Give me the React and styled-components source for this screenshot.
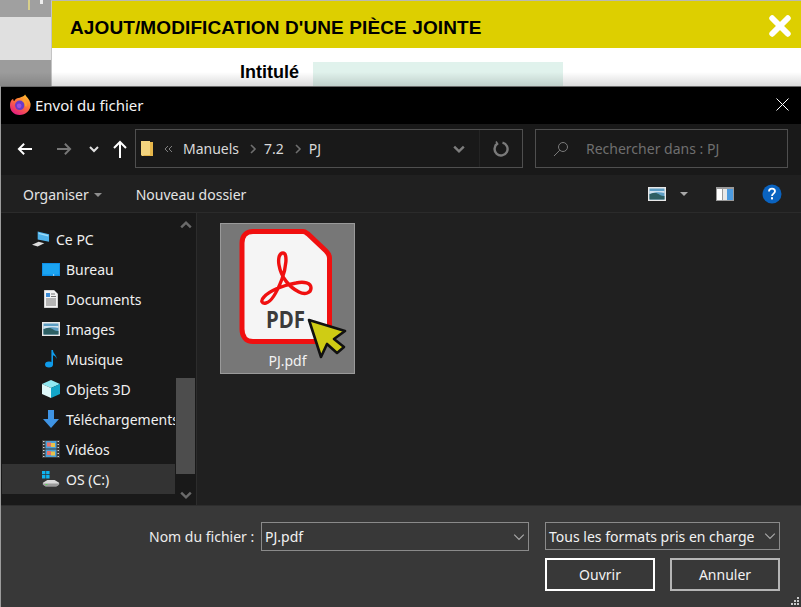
import React from 'react'
import styled, { createGlobalStyle } from 'styled-components'

const GlobalStyle = createGlobalStyle`
  html, body {
    margin: 0;
    padding: 0;
    background: #9c9c9c;
  }
  * { box-sizing: border-box; }
`

const Page = styled.div`
  position: relative;
  width: 801px;
  height: 607px;
  display: flex;
  overflow: hidden;
  font-family: "Noto Sans", "Open Sans", sans-serif;
`

/* grey page behind the modal */
const Backdrop = styled.div`
  width: 51px;
  display: flex;
  flex-direction: column;
  flex-shrink: 0;
`
const BackdropTop = styled.div`
  height: 17px;
  background: #a0a0a0;
  display: flex;
  gap: 10px;
  padding-left: 28px;
  align-items: flex-start;
`
const BackdropMark = styled.span`
  width: ${p => p.$w}px;
  height: ${p => p.$h}px;
  background: ${p => p.$c};
`
const BackdropMid = styled.div`
  height: 43px;
  background: #e0e0e0;
`
const BackdropLow = styled.div`
  flex: 1;
  background: #9c9c9c;
`

const Modal = styled.div`
  flex: 1;
  display: flex;
  flex-direction: column;
  border-top: 1px solid #b9b9b0;
  border-left: 1px solid #c4c4c4;
`
const ModalHeader = styled.div`
  height: 47px;
  background: #ddcf00;
  display: flex;
  align-items: center;
  justify-content: space-between;
  padding: 0 10px 0 18px;
`
const ModalTitle = styled.h1`
  margin: 6px 0 0;
  font-family: "Liberation Sans", Arial, sans-serif;
  font-weight: 700;
  font-size: 19px;
  letter-spacing: 0.11px;
  color: #000;
`
const CloseWrap = styled.span`
  display: flex;
  margin-top: 2px;
`
const ModalBody = styled.div`
  flex: 1;
  background: #fff;
  display: flex;
  align-items: flex-start;
  padding-top: 14px;
`
const FieldLabel = styled.div`
  width: 247px;
  text-align: right;
  font-family: "Liberation Sans", Arial, sans-serif;
  font-weight: 700;
  font-size: 18px;
  color: #000;
`
const FieldBox = styled.div`
  margin-left: 14px;
  width: 250px;
  height: 60px;
  background: #e0f2ec;
`

/* the file dialog lies over the page */
const DialogShadow = styled.div`
  position: absolute;
  left: 0;
  right: 0;
  top: 72px;
  height: 14px;
  background: linear-gradient(to bottom, rgba(0, 0, 0, 0), rgba(0, 0, 0, 0.14));
`
const Dialog = styled.div`
  position: absolute;
  left: 1px;
  top: 86px;
  width: 800px;
  height: 521px;
  display: flex;
  flex-direction: column;
  color: #fff;
  font-size: 14px;
  background: #202020;
  border-top: 1px solid #6a6a6a;
`
const TitleBar = styled.div`
  height: 37px;
  flex-shrink: 0;
  background: #000;
  display: flex;
  align-items: center;
  padding: 0 12px 2px 9px;
  gap: 4px;
`
const TitleText = styled.span`
  flex: 1;
  font-size: 15px;
  color: #f4f4f4;
`
const AddressRow = styled.div`
  height: 51px;
  flex-shrink: 0;
  background: #191919;
  display: flex;
  align-items: flex-start;
  padding: 5px 12px 0 0;
`
const NavButtons = styled.div`
  width: 134px;
  height: 39px;
  display: flex;
  align-items: center;
  padding-left: 16px;
`
const NavButton = styled.span`
  width: ${p => p.$w}px;
  display: flex;
  align-items: center;
`
const AddressBox = styled.div`
  width: 388px;
  height: 39px;
  border: 1px solid #4f4f4f;
  display: flex;
  align-items: center;
  padding-left: 5px;
`
const Crumb = styled.span`
  color: #d9d9d9;
  margin-left: ${p => p.$ml || 0}px;
  display: inline-flex;
  align-items: center;
`
const AddressEnd = styled.div`
  margin-left: auto;
  height: 100%;
  display: flex;
  align-items: center;
`
const AddressChevron = styled.div`
  width: 42px;
  height: 100%;
  display: flex;
  align-items: center;
  justify-content: center;
  border-right: 1px solid #242424;
`
const Refresh = styled.div`
  width: 42px;
  display: flex;
  align-items: center;
  justify-content: center;
`
const SearchBox = styled.div`
  width: 253px;
  height: 39px;
  margin-left: 12px;
  border: 1px solid #4f4f4f;
  display: flex;
  align-items: center;
  padding-left: 17px;
  gap: 17px;
  color: #6f6f6f;
`
const Toolbar = styled.div`
  height: 38px;
  flex-shrink: 0;
  background: #202020;
  display: flex;
  align-items: center;
  padding: 2px 19px 0 22px;
  border-bottom: 1px solid #2b2b2b;
  color: #e4e4e4;
`
const ToolItem = styled.span`
  display: inline-flex;
  align-items: center;
  gap: 5px;
  margin-right: 34px;
`
const ToolIcons = styled.div`
  margin-left: auto;
  display: flex;
  align-items: center;
  margin-top: -2px;
`
const ToolGap = styled.span`
  width: ${p => p.$w}px;
`
const Caret = styled.span`
  width: 0;
  height: 0;
  border-left: 4px solid transparent;
  border-right: 4px solid transparent;
  border-top: 4px solid ${p => p.$c || '#8f8f8f'};
`
const Content = styled.div`
  flex: 1;
  min-height: 0;
  display: flex;
`
const NavPanel = styled.div`
  width: 196px;
  flex-shrink: 0;
  background: #191919;
  display: flex;
  border-right: 1px solid #2c2c2c;
`
const NavList = styled.div`
  width: 173px;
  margin-left: 1px;
  padding-top: 11px;
  display: flex;
  flex-direction: column;
  overflow: hidden;
`
const NavRow = styled.div`
  height: 30px;
  flex-shrink: 0;
  display: flex;
  align-items: center;
  padding-left: ${p => p.$root ? 30 : 40}px;
  gap: 6px;
  color: #f0f0f0;
  white-space: nowrap;
  background: ${p => p.$selected ? '#333' : 'transparent'};
`
const NavIcon = styled.span`
  width: 18px;
  height: 20px;
  flex-shrink: 0;
  display: flex;
  align-items: center;
  justify-content: center;
`
const Scrollbar = styled.div`
  width: 19px;
  margin-left: 1px;
  display: flex;
  flex-direction: column;
  align-items: center;
  justify-content: space-between;
  padding: 6px 0 4px;
`
const ScrollTrack = styled.div`
  flex: 1;
  width: 100%;
  display: flex;
  align-items: flex-end;
  padding-bottom: 15px;
`
const ScrollThumb = styled.div`
  width: 100%;
  height: 96px;
  background: #4d4d4d;
`
const Files = styled.div`
  flex: 1;
  background: #202020;
  padding: 10px 0 0 23px;
`
const FileTile = styled.div`
  width: 135px;
  height: 151px;
  background: #777;
  border: 1px solid #9a9a9a;
  padding: 5px 0 0 18px;
  position: relative;
`
const FileName = styled.span`
  position: absolute;
  left: 0;
  right: 0;
  text-align: center;
  bottom: 3px;
  color: #f2f2f2;
`
const Footer = styled.div`
  height: 102px;
  flex-shrink: 0;
  background: #383838;
  border-top: 1px solid #2d2d2d;
  position: relative;
  padding: 16px 21px 0 148px;
  display: flex;
  flex-direction: column;
  gap: 7px;
`
const FooterRow = styled.div`
  display: flex;
  align-items: flex-start;
  justify-content: ${p => p.$end ? 'flex-end' : 'flex-start'};
`
const FooterLabel = styled.span`
  width: 112px;
  flex-shrink: 0;
  color: #ececec;
  line-height: 29px;
`
const Combo = styled.div`
  width: ${p => p.$w}px;
  height: ${p => p.$h}px;
  margin-right: ${p => p.$mr || 0}px;
  border: 1px solid #8a8a8a;
  display: flex;
  align-items: center;
  justify-content: space-between;
  padding: 0 3px 0 3px;
  color: #f2f2f2;
`
const DialogButton = styled.div`
  width: 110px;
  height: 33px;
  margin-left: ${p => p.$ml || 0}px;
  border: 2px solid ${p => p.$primary ? '#fff' : '#b5b5b5'};
  display: flex;
  align-items: center;
  justify-content: center;
  color: #f2f2f2;
`
const Grip = styled.svg`
  position: absolute;
  right: 1px;
  bottom: 1px;
`

const ArrowLeft = () => (
  <svg width="16" height="14" viewBox="0 0 18 16" fill="none" stroke="#fff" strokeWidth="2.2">
    <path d="M17 8H2M8 2L2 8l6 6" />
  </svg>
)
const ArrowRight = () => (
  <svg width="16" height="14" viewBox="0 0 18 16" fill="none" stroke="#777" strokeWidth="2.2">
    <path d="M1 8h15M10 2l6 6-6 6" />
  </svg>
)
const ArrowUp = () => (
  <svg width="14" height="18" viewBox="0 0 14 18" fill="none" stroke="#fff" strokeWidth="2">
    <path d="M7 18V2M1 8l6-6 6 6" />
  </svg>
)
const Chevron = ({ size = 10, color = '#e0e0e0', width = 2, up }) => (
  <svg width={size} height={size} viewBox="0 0 10 10" fill="none" stroke={color} strokeWidth={width}>
    <path d={up ? 'M1 7l4-4 4 4' : 'M1 3l4 4 4-4'} />
  </svg>
)
const CrumbArrow = () => (
  <svg width="8" height="10" viewBox="0 0 8 10" fill="none" stroke="#6e6e6e" strokeWidth="1.6">
    <path d="M2 1l4 4-4 4" />
  </svg>
)
const DoubleChevron = () => (
  <svg width="9" height="8" viewBox="0 0 9 8" fill="none" stroke="#808080" strokeWidth="1">
    <path d="M4 1L1 4l3 3M8 1L5 4l3 3" />
  </svg>
)
const CloseThin = () => (
  <svg width="13" height="13" viewBox="0 0 13 13" stroke="#fff" strokeWidth="1">
    <path d="M0.5 0.5l12 12M12.5 0.5l-12 12" />
  </svg>
)
const CloseBold = () => (
  <svg width="22" height="22" viewBox="0 0 24 24" stroke="#fff" strokeWidth="6.4" strokeLinecap="round">
    <path d="M3.5 3.5l17 17M20.5 3.5l-17 17" />
  </svg>
)
const Firefox = () => (
  <svg width="21" height="21" viewBox="1 0.5 19.5 19.5">
    <defs>
      <linearGradient id="ffx" x1="0.8" y1="0" x2="0.2" y2="1">
        <stop offset="0" stopColor="#ffc22e" />
        <stop offset="0.45" stopColor="#ff7139" />
        <stop offset="1" stopColor="#e31587" />
      </linearGradient>
    </defs>
    <path d="M15 1c1 2 4 4 5 8 1 6-4 11-10 11S1 16 1 11c0-3 1-5 3-6 0 1 0 2 1 2 1-2 3-3 5-3 2-1 4-1 5-3z" fill="url(#ffx)" />
    <circle cx="10" cy="11" r="4.4" fill="#6a3bc8" />
    <circle cx="9.5" cy="11.5" r="2.2" fill="#9a4fe0" />
    <path d="M13 6c2 1 3 3 2.6 6" stroke="#ffa22e" strokeWidth="2" fill="none" />
  </svg>
)
const AddressFolder = () => (
  <svg width="13" height="16" viewBox="0 0 13 16">
    <path d="M0 0h9v15H1l-1-1z" fill="#f3d47f" />
    <path d="M9 1h3v14H3l-1-1h7z" fill="#e6b64a" />
  </svg>
)
const RefreshIcon = () => (
  <svg width="16" height="16" viewBox="0 0 16 16" fill="none" stroke="#7a7a7a" strokeWidth="2.4">
    <path d="M4.5 2.6A6.5 6.5 0 1 0 9.5 1.7" />
    <path d="M3 0.5l1.6 2.4-2.6 1.2" strokeWidth="1.6" />
  </svg>
)
const SearchIcon = () => (
  <svg width="16" height="16" viewBox="0 0 16 16" fill="none" stroke="#7b7b7b" strokeWidth="1">
    <circle cx="10" cy="6" r="4.5" />
    <path d="M6.8 9.2L1 15" />
  </svg>
)
const PictureIcon = () => (
  <svg width="18" height="14" viewBox="0 0 18 14">
    <rect width="18" height="14" fill="#e8e8e8" />
    <rect x="1.5" y="1.5" width="15" height="11" fill="#5d9ec4" />
    <path d="M1.5 7c3-2 6-2 9 0s4 2 6 2v3.5h-15z" fill="#2d5f63" />
    <path d="M1.5 4h15v2c-4-1-10-1-15 1z" fill="#cfe2ef" />
  </svg>
)
const PanelIcon = () => (
  <svg width="18" height="14" viewBox="0 0 18 14">
    <rect width="18" height="14" fill="#9a9a9a" />
    <rect x="1" y="2" width="5" height="11" fill="#fff" />
    <rect x="7" y="2" width="4" height="11" fill="#e8e8e8" />
    <rect x="11" y="2" width="6" height="11" fill="#4c9be0" />
  </svg>
)
const HelpIcon = () => (
  <svg width="20" height="20" viewBox="0 0 20 20">
    <circle cx="10" cy="10" r="9.5" fill="#0a63c0" />
    <path d="M7 7.4C7 5.6 8.3 4.6 10 4.6s3 1 3 2.6c0 2.4-3 2.4-3 4.8" fill="none" stroke="#fff" strokeWidth="1.8" />
    <rect x="9" y="13.2" width="2" height="2.2" fill="#fff" />
  </svg>
)
const PcIcon = () => (
  <svg width="19" height="16" viewBox="0 0 19 16">
    <path d="M6 0l12 3v8L6 8.5z" fill="#4fb2ea" />
    <path d="M7 1.4l10 2.5v1.4L7 2.8z" fill="#9edcf8" />
    <path d="M0 14l7-3 6 1.6-7 3.2z" fill="#dcdcdc" />
  </svg>
)
const DesktopIcon = () => (
  <svg width="18" height="13" viewBox="0 0 18 13">
    <rect width="18" height="13" fill="#0f8fe6" />
    <rect x="1" y="1" width="16" height="10.5" fill="#1ba4f2" />
    <rect x="11" y="11.5" width="1.2" height="1" fill="#fff" />
  </svg>
)
const DocIcon = () => (
  <svg width="14" height="18" viewBox="0 0 14 18">
    <path d="M0 0h10l4 4v14H0z" fill="#f4f4f4" stroke="#888" strokeWidth="0.6" />
    <rect x="2" y="3" width="4" height="4" fill="#3a8bd6" />
    <path d="M7 4h4M7 6.5h5M2 9h10M2 11h10M2 13h10M2 15h10" stroke="#777" strokeWidth="1" />
  </svg>
)
const MusicIcon = () => (
  <svg width="14" height="18" viewBox="0 0 14 18" fill="#0f9bea">
    <ellipse cx="5" cy="14.5" rx="4" ry="3" />
    <path d="M7.4 0h1.6c0 4 4 5 3.6 9-.6-2.5-2.2-3.4-3.6-3.8V15H7.4z" />
  </svg>
)
const CubeIcon = () => (
  <svg width="18" height="18" viewBox="0 0 18 18">
    <path d="M9 0l9 4-9 4-9-4z" fill="#8fe8f2" />
    <path d="M0 4l9 4v10l-9-4z" fill="#dff8fa" />
    <path d="M18 4L9 8v10l9-4z" fill="#12a5c8" />
  </svg>
)
const DownloadIcon = () => (
  <svg width="16" height="18" viewBox="0 0 16 18" fill="#3f94e4">
    <path d="M5 0h6v9h5l-8 9-8-9h5z" />
  </svg>
)
const VideoIcon = () => (
  <svg width="18" height="18" viewBox="0 0 18 18">
    <rect width="18" height="18" fill="#3a3a3a" />
    <path d="M1 1.5h1.5M1 4.5h1.5M1 7.5h1.5M1 10.5h1.5M1 13.5h1.5M1 16.5h1.5M15.5 1.5H17M15.5 4.5H17M15.5 7.5H17M15.5 10.5H17M15.5 13.5H17M15.5 16.5H17" stroke="#cfcfcf" strokeWidth="1" />
    <rect x="3.5" y="1" width="11" height="7.5" fill="#4aa0d8" />
    <rect x="3.5" y="9.5" width="11" height="7.5" fill="#4aa0d8" />
    <rect x="5" y="2.5" width="4" height="4" fill="#e8716a" />
    <rect x="9" y="3" width="4" height="4" fill="#e8c24a" />
    <rect x="5" y="11" width="4" height="4" fill="#e8716a" />
    <rect x="9" y="11.5" width="4" height="4" fill="#e8c24a" />
  </svg>
)
const DriveIcon = () => (
  <svg width="20" height="19" viewBox="0 0 20 19">
    <path d="M0 0h3.8v3.8H0zM4.6 0h3.8v3.8H4.6zM0 4.6h3.8v3.8H0zM4.6 4.6h3.8v3.8H4.6z" fill="#0fb4f0" />
    <path d="M1 13l5-3h8l5 3v2l-3 2H4l-3-2z" fill="#dadada" />
    <path d="M1 14h18v1.4l-3 2H4l-3-2z" fill="#9a9a9a" />
    <rect x="4" y="14.6" width="2" height="1" fill="#4ce04c" />
  </svg>
)
const PdfCursorArt = () => (
  <svg width="112" height="132" viewBox="0 0 112 132">
    <path
      d="M14 2.5h50c2 0 3 1 5 2.5l18 17c2 2 3.5 4 3.5 7v71c0 8-5 12.5-12 12.5H14c-7 0-11-5-11-12.5V14C3 7 7 2.5 14 2.5z"
      fill="#f5f5f5"
      stroke="#f01010"
      strokeWidth="5"
    />
    <path
      d="M44 24C40 24 39 30 40 36C42 48 50 58 60 63C66 66 72 64 72 59C72 54 65 52 57 54C44 56 30 62 25 68C21 72 23 75 27 74C32 73 38 63 43 50C47 39 49 24 44 24Z"
      fill="none"
      stroke="#f01010"
      strokeWidth="3.4"
    />
    <text x="27" y="99" textLength="39" lengthAdjust="spacingAndGlyphs" fontFamily="Noto Sans, sans-serif" fontWeight="700" fontSize="24" fill="#3b3b3b">PDF</text>
    <path d="M70 91L106 102L95 110L105 118L98 124L88 115L82 128z" fill="#cfcc14" stroke="#111" strokeWidth="2.6" strokeLinejoin="round" />
  </svg>
)

const navItems = [
  { label: 'Bureau', icon: <DesktopIcon /> },
  { label: 'Documents', icon: <DocIcon /> },
  { label: 'Images', icon: <PictureIcon /> },
  { label: 'Musique', icon: <MusicIcon /> },
  { label: 'Objets 3D', icon: <CubeIcon /> },
  { label: 'Téléchargements', icon: <DownloadIcon /> },
  { label: 'Vidéos', icon: <VideoIcon /> },
  { label: 'OS (C:)', icon: <DriveIcon />, selected: true },
]

export default function App() {
  return (
    <Page>
      <GlobalStyle />
      <Backdrop>
        <BackdropTop>
          <BackdropMark $w={2} $h={10} $c="#d8cf8a" />
          <BackdropMark $w={3} $h={4} $c="#eee" />
        </BackdropTop>
        <BackdropMid />
        <BackdropLow />
      </Backdrop>
      <Modal>
        <ModalHeader>
          <ModalTitle>AJOUT/MODIFICATION D'UNE PIÈCE JOINTE</ModalTitle>
          <CloseWrap><CloseBold /></CloseWrap>
        </ModalHeader>
        <ModalBody>
          <FieldLabel>Intitulé</FieldLabel>
          <FieldBox />
        </ModalBody>
      </Modal>
      <DialogShadow />
      <Dialog>
        <TitleBar>
          <Firefox />
          <TitleText>Envoi du fichier</TitleText>
          <CloseThin />
        </TitleBar>
        <AddressRow>
          <NavButtons>
            <NavButton $w={39}><ArrowLeft /></NavButton>
            <NavButton $w={33}><ArrowRight /></NavButton>
            <NavButton $w={24}><Chevron /></NavButton>
            <NavButton $w={14}><ArrowUp /></NavButton>
          </NavButtons>
          <AddressBox>
            <AddressFolder />
            <Crumb $ml={10}><DoubleChevron /></Crumb>
            <Crumb $ml={10}>Manuels</Crumb>
            <Crumb $ml={10}><CrumbArrow /></Crumb>
            <Crumb $ml={7}>7.2</Crumb>
            <Crumb $ml={10}><CrumbArrow /></Crumb>
            <Crumb $ml={7}>PJ</Crumb>
            <AddressEnd>
              <AddressChevron><Chevron size={12} color="#7d7d7d" /></AddressChevron>
              <Refresh><RefreshIcon /></Refresh>
            </AddressEnd>
          </AddressBox>
          <SearchBox>
            <SearchIcon />
            <span>Rechercher dans : PJ</span>
          </SearchBox>
        </AddressRow>
        <Toolbar>
          <ToolItem>Organiser <Caret /></ToolItem>
          <ToolItem>Nouveau dossier</ToolItem>
          <ToolIcons>
            <PictureIcon />
            <ToolGap $w={14} />
            <Caret $c="#a8a8a8" />
            <ToolGap $w={28} />
            <PanelIcon />
            <ToolGap $w={28} />
            <HelpIcon />
          </ToolIcons>
        </Toolbar>
        <Content>
          <NavPanel>
            <NavList>
              <NavRow $root><NavIcon><PcIcon /></NavIcon>Ce PC</NavRow>
              {navItems.map(item => (
                <NavRow key={item.label} $selected={item.selected}>
                  <NavIcon>{item.icon}</NavIcon>
                  {item.label}
                </NavRow>
              ))}
            </NavList>
            <Scrollbar>
              <Chevron size={12} color="#6a6a6a" up />
              <ScrollTrack><ScrollThumb /></ScrollTrack>
              <Chevron size={12} color="#6a6a6a" />
            </Scrollbar>
          </NavPanel>
          <Files>
            <FileTile>
              <PdfCursorArt />
              <FileName>PJ.pdf</FileName>
            </FileTile>
          </Files>
        </Content>
        <Footer>
          <FooterRow>
            <FooterLabel>Nom du fichier :</FooterLabel>
            <Combo $w={268} $h={29} $mr={16}>
              PJ.pdf
              <Chevron size={12} color="#a8a8a8" width={1} />
            </Combo>
            <Combo $w={235} $h={28}>
              Tous les formats pris en charge
              <Chevron size={12} color="#a8a8a8" width={1} />
            </Combo>
          </FooterRow>
          <FooterRow $end>
            <DialogButton $primary>Ouvrir</DialogButton>
            <DialogButton $ml={15}>Annuler</DialogButton>
          </FooterRow>
          <Grip width="10" height="10" viewBox="0 0 10 10" fill="#c8c8c8">
            <rect x="7" y="1" width="2" height="2" />
            <rect x="4" y="4" width="2" height="2" />
            <rect x="7" y="4" width="2" height="2" />
            <rect x="1" y="7" width="2" height="2" />
            <rect x="4" y="7" width="2" height="2" />
            <rect x="7" y="7" width="2" height="2" />
          </Grip>
        </Footer>
      </Dialog>
    </Page>
  )
}
